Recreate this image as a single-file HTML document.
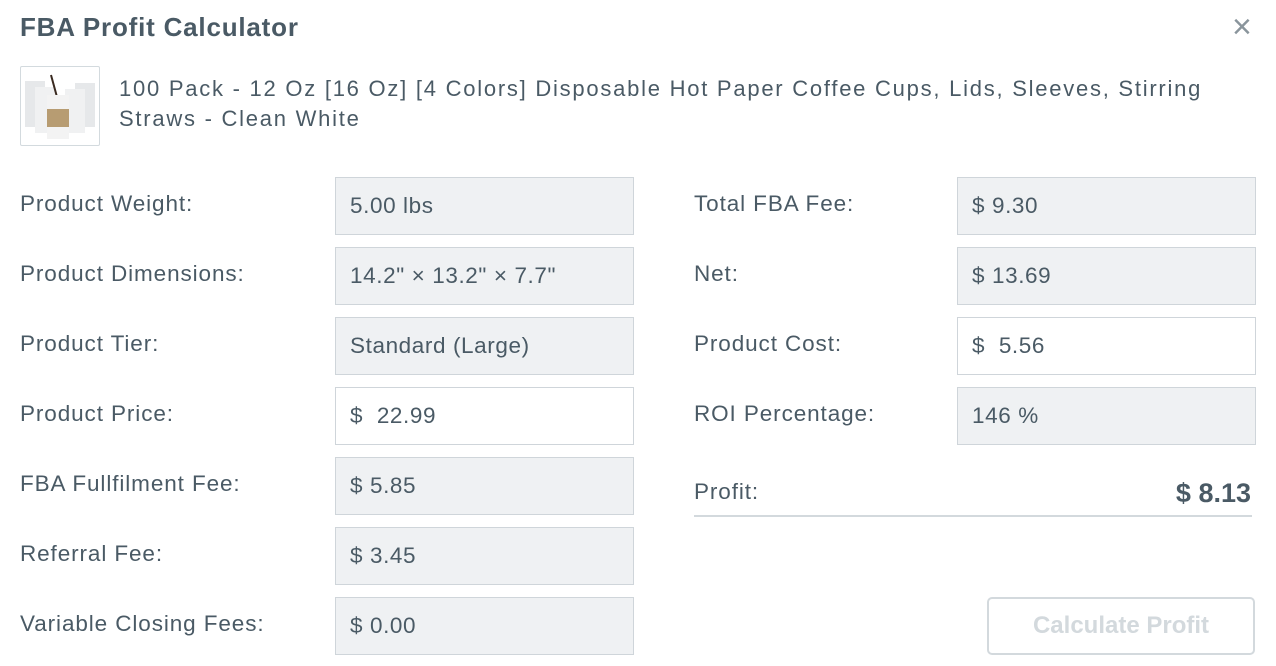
<!DOCTYPE html>
<html><head><meta charset="utf-8"><style>
body{margin:0;width:1276px;height:666px;background:#fff;font-family:"Liberation Sans",sans-serif;color:#4a5a65;position:relative;overflow:hidden}
.a{position:absolute}
.t{left:20px;top:12px;font-size:26px;font-weight:bold;letter-spacing:0.8px}
.x{left:1232px;top:8px;font-size:34px;color:#8a959c}
.img{left:20px;top:66px;width:78px;height:78px;border:1px solid #d3dade;border-radius:2px}
.pt{left:119px;top:74px;font-size:22px;line-height:30px;width:1100px;letter-spacing:1.75px}
.l{font-size:22.5px;height:58px;line-height:56px;letter-spacing:0.9px}
.b{width:299px;height:58px;box-sizing:border-box;border:1px solid #cfd5da;background:#eff1f3;font-size:22.5px;letter-spacing:0.6px;line-height:56px;padding-left:14px}
.w{background:#fff}
</style></head><body>
<div class="a t">FBA Profit Calculator</div>
<div class="a x">×</div>
<div class="a img"><svg width="78" height="78"><rect x="4" y="14" width="20" height="46" fill="#e6e8ea"/><rect x="54" y="16" width="20" height="44" fill="#e6e8ea"/><rect x="14" y="20" width="20" height="46" fill="#f0f1f2"/><rect x="44" y="22" width="20" height="44" fill="#f0f1f2"/><line x1="30" y1="8" x2="36" y2="30" stroke="#3a2a20" stroke-width="2"/><rect x="26" y="28" width="22" height="44" fill="#f3f3f3"/><rect x="26" y="42" width="22" height="18" fill="#b79c72"/></svg></div>
<div class="a pt">100 Pack - 12 Oz [16 Oz] [4 Colors] Disposable Hot Paper Coffee Cups, Lids, Sleeves, Stirring Straws - Clean White</div>

<div class="a l" style="left:20px;top:176px">Product Weight:</div>
<div class="a b" style="left:335px;top:177px">5.00 lbs</div>
<div class="a l" style="left:20px;top:246px">Product Dimensions:</div>
<div class="a b" style="left:335px;top:247px">14.2" × 13.2" × 7.7"</div>
<div class="a l" style="left:20px;top:316px">Product Tier:</div>
<div class="a b" style="left:335px;top:317px">Standard (Large)</div>
<div class="a l" style="left:20px;top:386px">Product Price:</div>
<div class="a b w" style="left:335px;top:387px">$ &nbsp;22.99</div>
<div class="a l" style="left:20px;top:456px">FBA Fullfilment Fee:</div>
<div class="a b" style="left:335px;top:457px">$ 5.85</div>
<div class="a l" style="left:20px;top:526px">Referral Fee:</div>
<div class="a b" style="left:335px;top:527px">$ 3.45</div>
<div class="a l" style="left:20px;top:596px">Variable Closing Fees:</div>
<div class="a b" style="left:335px;top:597px">$ 0.00</div>

<div class="a l" style="left:694px;top:176px">Total FBA Fee:</div>
<div class="a b" style="left:957px;top:177px">$ 9.30</div>
<div class="a l" style="left:694px;top:246px">Net:</div>
<div class="a b" style="left:957px;top:247px">$ 13.69</div>
<div class="a l" style="left:694px;top:316px">Product Cost:</div>
<div class="a b w" style="left:957px;top:317px">$ &nbsp;5.56</div>
<div class="a l" style="left:694px;top:386px">ROI Percentage:</div>
<div class="a b" style="left:957px;top:387px">146 %</div>

<div class="a" style="left:694px;top:479px;font-size:22.5px;letter-spacing:0.9px">Profit:</div>
<div class="a" style="left:1100px;top:478px;width:151px;text-align:right;font-size:27px;font-weight:bold">$ 8.13</div>
<div class="a" style="left:694px;top:515px;width:558px;height:2px;background:#d3d9dd"></div>

<div class="a" style="left:987px;top:597px;width:264px;height:54px;border:2px solid #d3d9dd;border-radius:5px;text-align:center;line-height:54px;font-size:24px;font-weight:bold;color:#d3d9dd">Calculate Profit</div>
</body></html>
